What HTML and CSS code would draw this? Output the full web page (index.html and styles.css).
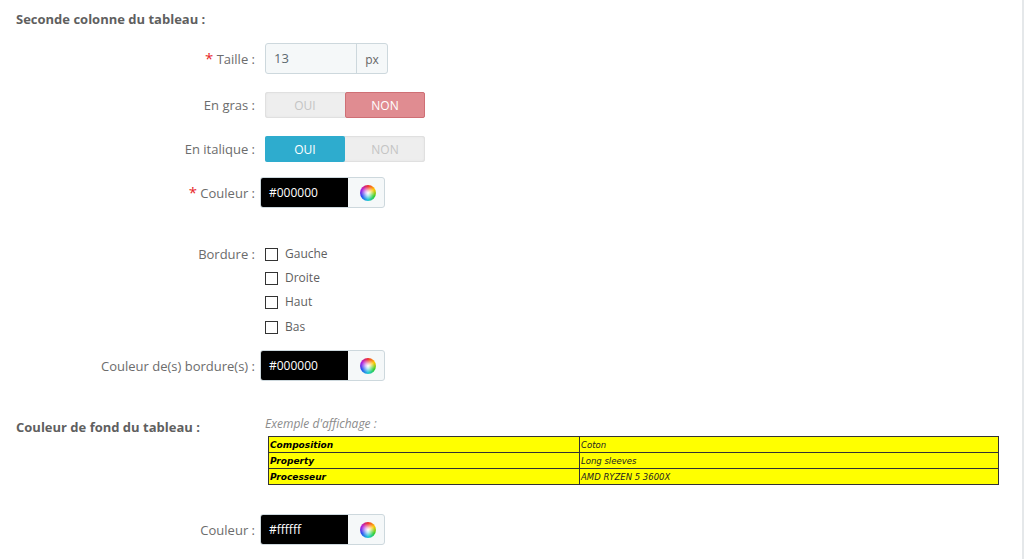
FILE: index.html
```html
<!DOCTYPE html>
<html lang="fr">
<head>
<meta charset="utf-8">
<title>Tableau</title>
<link rel="stylesheet" href="styles.css">
</head>
<body>
<main class="panel">
  <h4 class="section-title">Seconde colonne du tableau :</h4>
  <div class="row row-size">
    <label class="label"><span class="req">*</span> Taille :</label>
    <div class="input-group size-group"><span class="field">13</span><span class="addon">px</span></div>
  </div>
  <div class="row row-bold">
    <label class="label">En gras :</label>
    <div class="switch"><span class="opt">OUI</span><span class="opt off-active">NON</span></div>
  </div>
  <div class="row row-italic">
    <label class="label">En italique :</label>
    <div class="switch"><span class="opt on-active">OUI</span><span class="opt">NON</span></div>
  </div>
  <div class="row row-color">
    <label class="label"><span class="req">*</span> Couleur :</label>
    <div class="color-group"><span class="swatch">#000000</span><span class="picker"><span class="wheel"></span></span></div>
  </div>
  <div class="row row-border">
    <label class="label">Bordure :</label>
    <div class="checks">
      <div class="check"><span class="box"></span><span class="check-text">Gauche</span></div>
      <div class="check"><span class="box"></span><span class="check-text">Droite</span></div>
      <div class="check"><span class="box"></span><span class="check-text">Haut</span></div>
      <div class="check check-last"><span class="box"></span><span class="check-text">Bas</span></div>
    </div>
  </div>
  <div class="row row-bcolor">
    <label class="label">Couleur de(s) bordure(s) :</label>
    <div class="color-group"><span class="swatch">#000000</span><span class="picker"><span class="wheel"></span></span></div>
  </div>
  <div class="row row-bg">
    <h4 class="section-title bg-title">Couleur de fond du tableau :</h4>
    <div class="preview">
      <div class="hint">Exemple d'affichage :</div>
      <table class="sample">
        <tr><th>Composition</th><td>Coton</td></tr>
        <tr><th>Property</th><td>Long sleeves</td></tr>
        <tr><th>Processeur</th><td>AMD RYZEN 5 3600X</td></tr>
      </table>
    </div>
  </div>
  <div class="row row-bgcolor">
    <label class="label">Couleur :</label>
    <div class="color-group"><span class="swatch">#ffffff</span><span class="picker"><span class="wheel"></span></span></div>
  </div>
</main>
</body>
</html>
```
FILE: styles.css
```css
* { box-sizing: border-box; }
html, body { margin: 0; height: 100%; overflow: hidden; background: #fff; }
body { font-family: "Open Sans", sans-serif; font-size: 13px; color: #666; }
.panel { width: 1024px; height: 559px; border-right: 2px solid #e5e8ea; padding: 10px 0 0 16px; }
.section-title { margin: 0; font-size: 13px; line-height: 18px; font-weight: 700; color: #5f5f5f; }
.row { display: flex; align-items: center; margin-left: -16px; }
.label { width: 255px; text-align: right; line-height: 18px; color: #6c6c6c; flex: none; }
.req { color: #e8262a; font-size: 15px; }
.row-size { margin-top: 15px; }
.row-bold { margin-top: 18px; }
.row-italic { margin-top: 18px; }
.row-color { margin-top: 15px; }
.row-border { margin-top: 37px; align-items: flex-start; }
.row-bcolor { margin-top: 14px; }
.row-bg { margin-top: 37px; margin-left: 0; align-items: flex-start; }
.row-bgcolor { margin-top: 29px; }
.input-group { margin-left: 10px; display: flex; height: 31px; width: 123px; border: 1px solid #cdd8dd; border-radius: 3px; background: #f5f8f9; }
.field { flex: 1; padding-left: 8px; line-height: 29px; color: #5c6a70; }
.addon { width: 31px; border-left: 1px solid #cdd8dd; text-align: center; line-height: 31px; color: #666; font-size: 12px; }
.switch { margin-left: 10px; display: flex; width: 160px; height: 26px; border-radius: 3px; background: #eee; box-shadow: inset 0 0 0 1px #e0e0e0, inset 0 0 2px 1px #e4e4e4; }
.opt { flex: none; width: 80px; text-align: center; line-height: 27px; color: #c4c4c4; font-size: 12px; }
.off-active { background: #e08c91; border: 1px solid #cf6f75; border-radius: 2px; color: #fff; line-height: 25px; }
.on-active { background: #2eacce; border-radius: 2px; color: #fff; }
.color-group { margin-left: 5px; display: flex; width: 125px; height: 31px; border: 1px solid #cdd8dd; border-radius: 3px; overflow: hidden; background: #f5f8f9; }
.swatch { width: 87px; background: #000; color: #fff; padding-left: 8px; line-height: 30px; font-size: 12px; }
.picker { flex: 1; display: flex; align-items: center; justify-content: center; padding-left: 3px; }
.wheel { width: 16px; height: 16px; border-radius: 50%; background: radial-gradient(circle, #fff 0, rgba(255,255,255,.7) 22%, rgba(255,255,255,0) 60%), conic-gradient(#f03030, #ffc800, #30d030, #20c8d8, #2850f0, #b020e0, #f03030); }
.checks { margin-left: 10px; }
.check { display: flex; align-items: center; height: 18px; margin-bottom: 6px; color: #5f5f5f; font-size: 12px; }
.check:nth-child(3) { margin-bottom: 7px; }
.check-last { margin-bottom: 0; }
.check-text { line-height: 16px; margin-top: -1px; }
.box { width: 13px; height: 13px; border: 1px solid #333; margin-right: 7px; background: #fff; }
.bg-title { width: 249px; flex: none; line-height: 18px; }
.preview { width: 734px; }
.hint { font-style: italic; font-size: 12px; color: #8c8c8c; line-height: 16px; margin-top: -2px; }
.sample { margin: 4px 0 0 3px; width: 731px; height: 49px; border-collapse: collapse; background: #ff0; color: #000; font-family: "DejaVu Sans", sans-serif; font-size: 8.5px; font-style: italic; }
.sample th, .sample td { border: 1px solid #333; padding: 0 1px; line-height: 14px; text-align: left; }
.sample th { width: 311px; font-weight: 700; font-size: 9px; }
.sample td { font-weight: 400; color: #222; }
```
